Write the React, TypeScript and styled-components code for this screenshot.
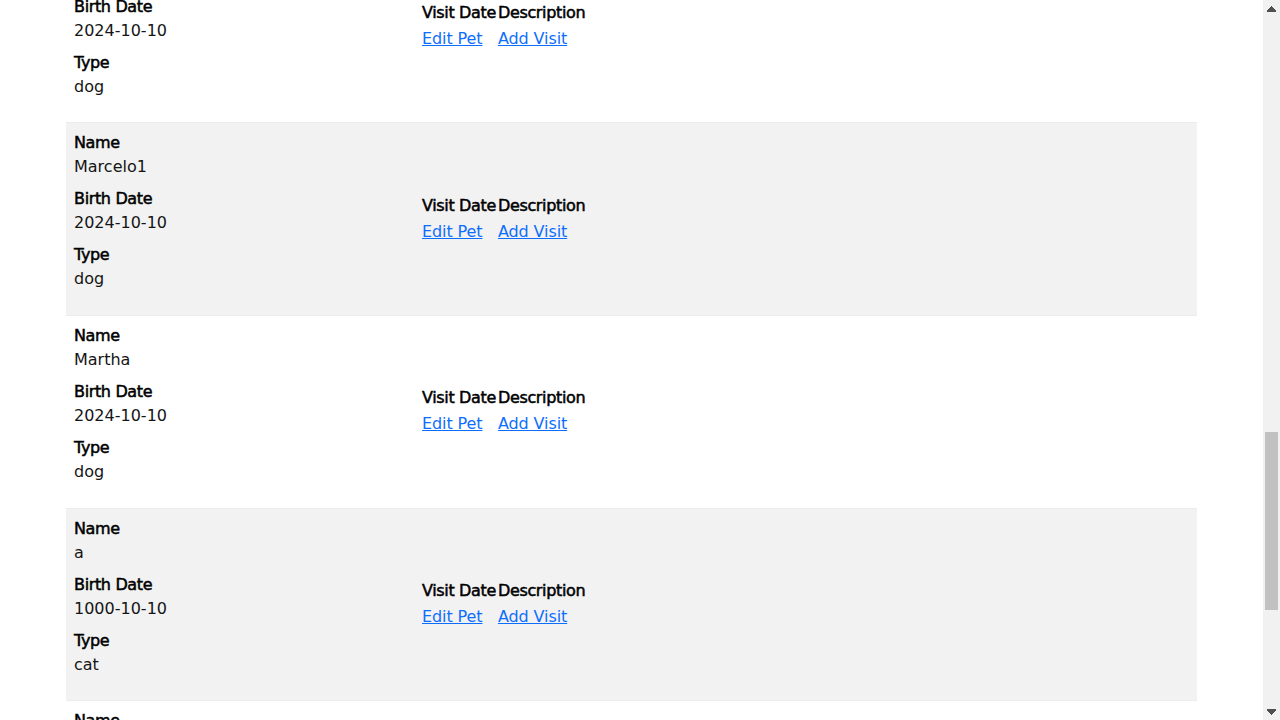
import React, { useLayoutEffect, useRef } from "react";
import styled, { createGlobalStyle } from "styled-components";

const GlobalStyle = createGlobalStyle`
  * { box-sizing: border-box; }
  html, body { margin: 0; padding: 0; background: #ffffff; overflow: hidden; }
  body {
    font-family: "DejaVu Sans", "Liberation Sans", sans-serif;
    font-size: 16px;
    line-height: 1.5;
    color: #151515;
  }
`;

const Frame = styled.div`
  display: flex;
  width: 100vw;
  height: 100vh;
  overflow: hidden;
`;

const Viewport = styled.div`
  flex: 1;
  height: 100%;
  overflow: hidden;
`;

const ScrollBar = styled.div`
  width: 17px;
  height: 100%;
  display: flex;
  flex-direction: column;
  background: #f1f1f1;
`;

const ArrowButton = styled.div`
  height: 17px;
  display: flex;
  align-items: center;
  justify-content: center;
  flex: none;
`;

const Track = styled.div<{ $top: number }>`
  flex: 1;
  padding: ${(p) => p.$top}px 2px 0;
`;

const Thumb = styled.div<{ $height: number }>`
  height: ${(p) => p.$height}px;
  background: #c1c1c1;
`;

const NavBar = styled.nav`
  height: 90px;
  background: #34302d;
  border-top: 4px solid #6db33f;
  display: flex;
  align-items: center;
  padding: 0 66px;
  gap: 32px;
`;

const Brand = styled.span`
  color: #f1f1f1;
  font-size: 22px;
  font-weight: bold;
  margin-right: auto;
`;

const NavItem = styled.span<{ $active?: boolean }>`
  color: ${(p) => (p.$active ? "#ffffff" : "#cfcfcf")};
  font-size: 14px;
  text-transform: uppercase;
  padding: 8px 12px;
  background: ${(p) => (p.$active ? "#6db33f" : "transparent")};
`;

const Container = styled.main`
  margin: 0 66px;
  padding-top: 80px;
`;

const Heading = styled.h2<{ $top?: number }>`
  font-size: 32px;
  line-height: 1.2;
  font-weight: normal;
  margin: ${(p) => p.$top ?? 0}px 0 24px;
  padding: 0 8px;
`;

const Table = styled.table`
  width: 100%;
  border-collapse: collapse;
  margin-bottom: 16px;
`;

const OwnerRow = styled.tr`
  height: 49px;
  border-bottom: 1px solid #ebebeb;
  &:nth-of-type(odd) { background: #f2f2f2; }
`;

const OwnerTh = styled.th`
  width: 150px;
  text-align: left;
  padding: 8px;
  -webkit-text-stroke: 0.5px currentColor;
  font-weight: normal;
`;

const OwnerTd = styled.td`
  padding: 8px;
`;

const ButtonRow = styled.div`
  display: flex;
  gap: 8px;
  padding: 0 8px;
`;

const Button = styled.span`
  display: inline-flex;
  align-items: center;
  height: 38px;
  padding: 0 12px;
  background: #34302d;
  color: #ffffff;
  border: 1px solid #6db33f;
  border-radius: 4px;
  font-size: 14px;
  text-transform: uppercase;
`;

const PetRow = styled.tr`
  border-bottom: 1px solid #ececec;
  &:nth-of-type(odd) { background: #f2f2f2; }
`;

const PetCell = styled.td`
  width: 348px;
  vertical-align: top;
  padding: 8px;
`;

const VisitsCell = styled.td`
  vertical-align: middle;
  padding: 8px;
`;

const Dl = styled.dl`
  margin: 0 0 15.67px;
`;

const Dt = styled.dt`
  color: #000000;
  -webkit-text-stroke: 0.5px currentColor;
  letter-spacing: -0.35px;
`;

const Dd = styled.dd`
  margin: 0 0 8px;
`;

const VisitsTable = styled.table`
  border-collapse: collapse;
`;

const VisitTh = styled.th`
  color: #000000;
  text-align: left;
  font-weight: normal;
  padding: 0 2px 1px 0;
  -webkit-text-stroke: 0.5px currentColor;
  letter-spacing: -0.35px;
  white-space: nowrap;
`;

const VisitTd = styled.td`
  padding: 1px 2px 1px 0;
  white-space: nowrap;
`;

const Link = styled.a`
  color: #0d6efd;
  text-decoration: underline;
  letter-spacing: -0.1px;
  cursor: pointer;
`;

const Footer = styled.footer`
  height: 200px;
  display: flex;
  align-items: center;
  justify-content: center;
  gap: 10px;
  color: #6db33f;
  font-size: 20px;
`;

type Pet = { name: string; birth: string; type: string };

const pets: Pet[] = [
  { name: "Leo", birth: "2010-09-07", type: "cat" },
  { name: "Basil", birth: "2012-08-06", type: "hamster" },
  { name: "Rosy", birth: "2011-04-17", type: "dog" },
  { name: "Jewel", birth: "2010-03-07", type: "dog" },
  { name: "Iggy", birth: "2010-11-30", type: "lizard" },
  { name: "Marcelo", birth: "2024-10-10", type: "dog" },
  { name: "Marcelo1", birth: "2024-10-10", type: "dog" },
  { name: "Martha", birth: "2024-10-10", type: "dog" },
  { name: "a", birth: "1000-10-10", type: "cat" },
  { name: "b", birth: "1000-10-10", type: "cat" },
];

const ANCHOR = 6;

const UpArrow = () => (
  <svg width="9" height="6" viewBox="0 0 9 6" shapeRendering="crispEdges">
    <path d="M4 0h1v1h1v1h1v1h1v1h1v2H0V4h1V3h1V2h1V1h1z" fill="#505050" />
  </svg>
);

const DownArrow = () => (
  <svg width="9" height="6" viewBox="0 0 9 6" shapeRendering="crispEdges">
    <path d="M0 0h9v2H8v1H7v1H6v1H5v1H4V5H3V4H2V3H1V2H0z" fill="#505050" />
  </svg>
);

export default function App() {
  const viewRef = useRef<HTMLDivElement>(null);
  const anchorRef = useRef<HTMLTableRowElement>(null);

  useLayoutEffect(() => {
    const view = viewRef.current;
    const el = anchorRef.current;
    if (!view || !el) return;
    const offset =
      el.getBoundingClientRect().top - view.getBoundingClientRect().top + view.scrollTop;
    view.scrollTop = Math.round(offset) - 123;
  }, []);

  return (
    <>
      <GlobalStyle />
      <Frame>
        <Viewport ref={viewRef}>
          <NavBar>
            <Brand>PetClinic</Brand>
            <NavItem>Home</NavItem>
            <NavItem $active>Find owners</NavItem>
            <NavItem>Veterinarians</NavItem>
            <NavItem>Error</NavItem>
          </NavBar>
          <Container>
            <Heading>Owner Information</Heading>
            <Table>
              <tbody>
                <OwnerRow>
                  <OwnerTh>Name</OwnerTh>
                  <OwnerTd>Marcelo Silva</OwnerTd>
                </OwnerRow>
                <OwnerRow>
                  <OwnerTh>Address</OwnerTh>
                  <OwnerTd>Rua das Flores 100</OwnerTd>
                </OwnerRow>
                <OwnerRow>
                  <OwnerTh>City</OwnerTh>
                  <OwnerTd>Lisboa</OwnerTd>
                </OwnerRow>
                <OwnerRow>
                  <OwnerTh>Telephone</OwnerTh>
                  <OwnerTd>6085551023</OwnerTd>
                </OwnerRow>
              </tbody>
            </Table>
            <ButtonRow>
              <Button>Edit Owner</Button>
              <Button>Add New Pet</Button>
            </ButtonRow>
            <Heading $top={86}>Pets and Visits</Heading>
            <Table>
              <tbody>
                {pets.map((p, i) => (
                  <PetRow key={i} ref={i === ANCHOR ? anchorRef : undefined}>
                    <PetCell>
                      <Dl>
                        <Dt>Name</Dt>
                        <Dd>{p.name}</Dd>
                        <Dt>Birth Date</Dt>
                        <Dd>{p.birth}</Dd>
                        <Dt>Type</Dt>
                        <Dd>{p.type}</Dd>
                      </Dl>
                    </PetCell>
                    <VisitsCell>
                      <VisitsTable>
                        <thead>
                          <tr>
                            <VisitTh>Visit Date</VisitTh>
                            <VisitTh>Description</VisitTh>
                          </tr>
                        </thead>
                        <tbody>
                          <tr>
                            <VisitTd>
                              <Link>Edit Pet</Link>
                            </VisitTd>
                            <VisitTd>
                              <Link>Add Visit</Link>
                            </VisitTd>
                          </tr>
                        </tbody>
                      </VisitsTable>
                    </VisitsCell>
                  </PetRow>
                ))}
              </tbody>
            </Table>
          </Container>
          <Footer>
            <svg width="40" height="40" viewBox="0 0 40 40">
              <circle cx="20" cy="20" r="18" fill="#6db33f" />
              <path d="M12 26 C14 14 24 10 30 10 C30 20 24 28 12 26 Z" fill="#fff" />
            </svg>
            <span>Spring</span>
          </Footer>
        </Viewport>
        <ScrollBar>
          <ArrowButton>
            <UpArrow />
          </ArrowButton>
          <Track $top={415}>
            <Thumb $height={178} />
          </Track>
          <ArrowButton>
            <DownArrow />
          </ArrowButton>
        </ScrollBar>
      </Frame>
    </>
  );
}
